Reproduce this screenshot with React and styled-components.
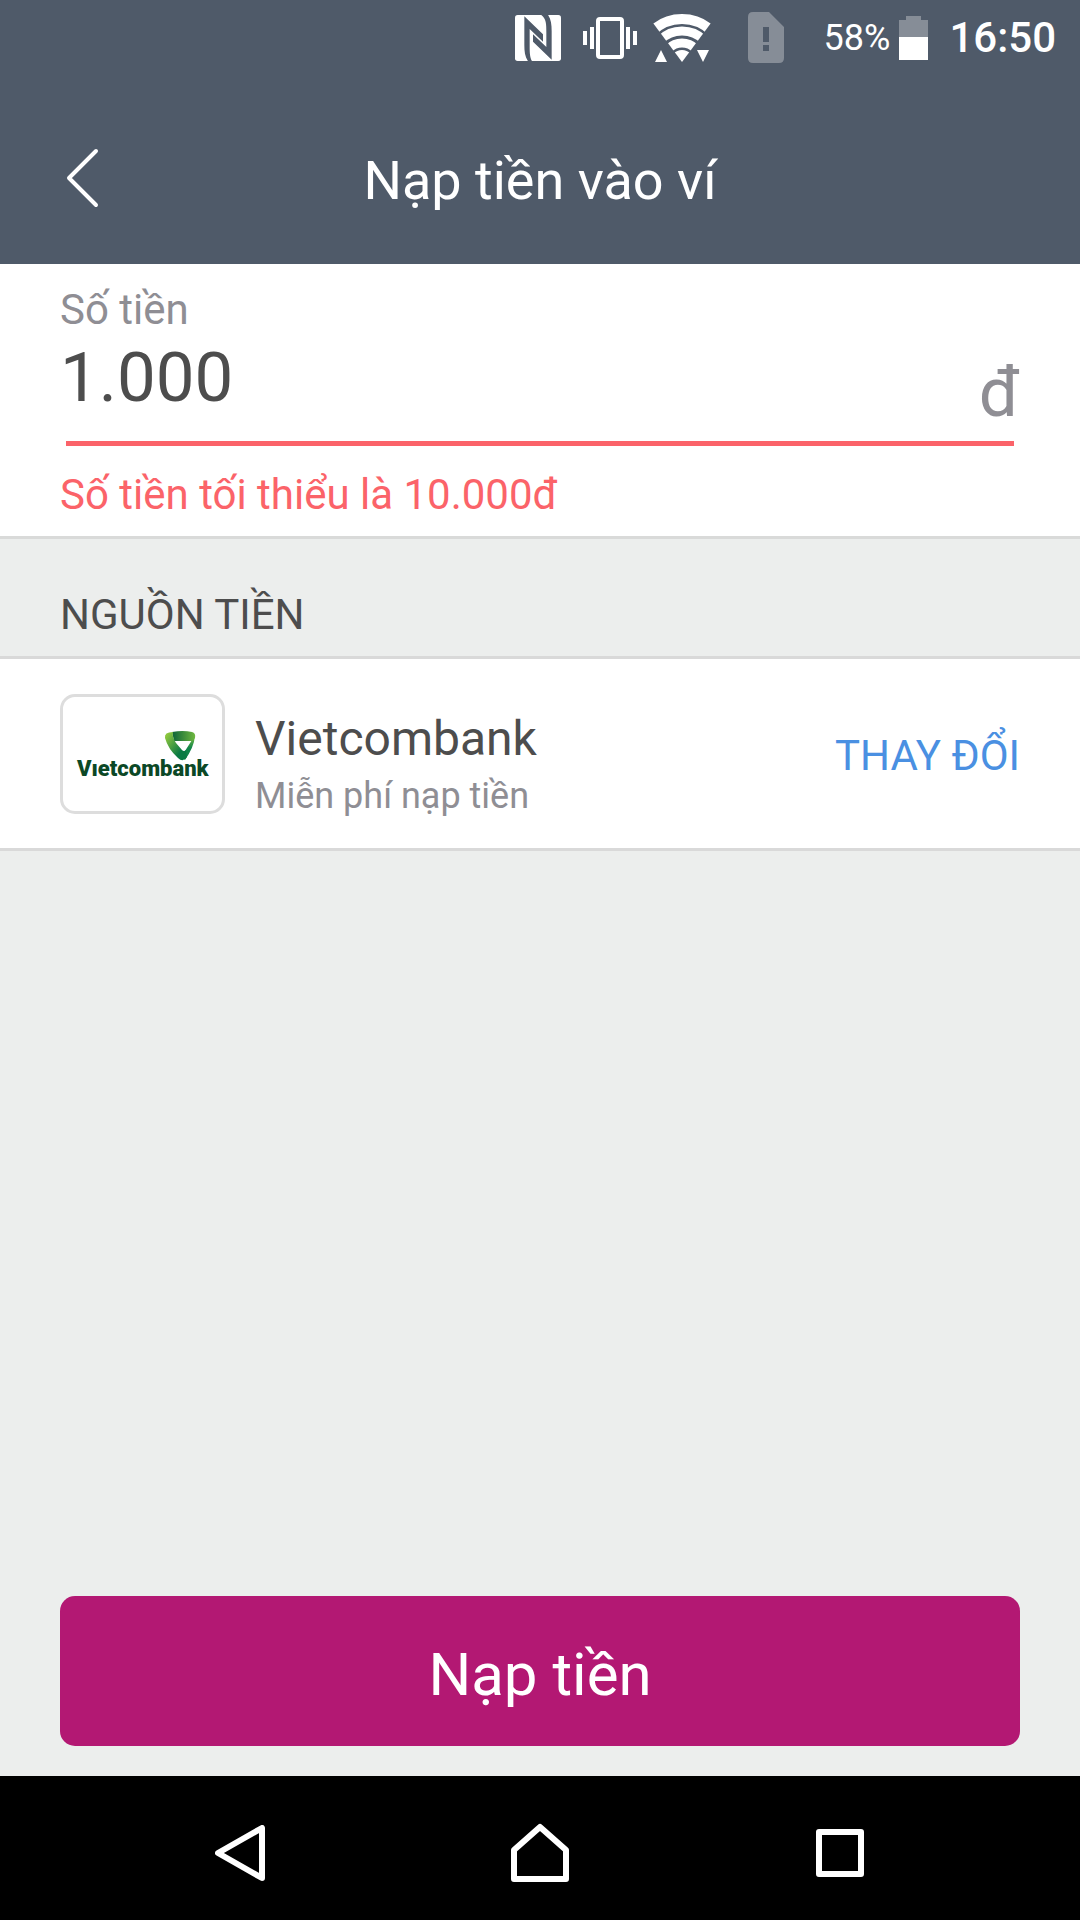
import React, { useState } from "react";
import styled, { createGlobalStyle } from "styled-components";

const GlobalStyle = createGlobalStyle`
  *, *::before, *::after { box-sizing: border-box; }
  body { margin: 0; background: #eceeed; }
  button, input { font: inherit; }
`;

const Screen = styled.div`
  display: flex;
  flex-direction: column;
  min-height: 100vh;
  background: #eceeed;
  color: #4d4d4d;
  font-family: Roboto, "Noto Sans", sans-serif;
  font-size: 42px;
  line-height: 48px;
`;

const StatusBar = styled.div`
  display: flex;
  justify-content: flex-end;
  align-items: center;
  height: 72px;
  padding: 3px 24px 0 0;
  background: #4f5a69;
  color: #fff;
`;

const StatusIcon = styled.svg`
  display: block;
  flex: none;
  margin-right: ${(p) => p.$gap}px;
`;

const BatteryLevel = styled.span`
  margin-right: 9px;
  font-size: 36px;
`;

const Clock = styled.time`
  font-weight: 500;
`;

const Header = styled.header`
  display: grid;
  grid-template-columns: 120px 1fr 120px;
  align-items: center;
  height: 192px;
  padding: 25px 24px 0;
  background: #4f5a69;
  color: #fff;
`;

const BackButton = styled.button`
  display: flex;
  align-items: center;
  height: 120px;
  padding: 0 0 6px 40px;
  border: 0;
  background: none;
  color: inherit;
`;

const Title = styled.h1`
  margin: 0;
  font-size: 54px;
  font-weight: 400;
  line-height: 64px;
  text-align: center;
`;

const AmountPanel = styled.section`
  padding: 22px 60px 17px;
  border-bottom: 3px solid #d9dad9;
  background: #fff;
`;

const FieldLabel = styled.label`
  display: block;
  color: #8f8e94;
`;

const AmountRow = styled.div`
  display: flex;
  height: 107px;
  font-size: 69px;
  line-height: 84px;
`;

const AmountInput = styled.input`
  flex: 1;
  min-width: 0;
  height: 86px;
  padding: 0;
  border: 0;
  outline: 0;
  background: transparent;
  color: #4d4d4d;
`;

const Currency = styled.span`
  align-self: flex-end;
  padding-bottom: 6px;
  color: #8f8e94;
`;

const Underline = styled.div`
  height: 5px;
  margin: 0 6px;
  background: #fb6369;
`;

const ErrorText = styled.p`
  margin: 25px 0 0;
  color: #fb6369;
`;

const SectionTitle = styled.h2`
  margin: 0;
  padding: 52px 60px 17px;
  font-size: 42px;
  font-weight: 400;
`;

const SourceRow = styled.section`
  display: flex;
  align-items: center;
  gap: 30px;
  padding: 28px 60px;
  border: solid #d9d9d9;
  border-width: 3px 0;
  background: #fff;
`;

const LogoFrame = styled.div`
  flex: none;
  width: 165px;
  height: 120px;
  border: 3px solid #dddddd;
  border-radius: 15px;
`;

const SourceInfo = styled.div`
  flex: 1;
  padding-top: 24px;
`;

const SourceName = styled.div`
  font-size: 48px;
  line-height: 56px;
`;

const SourceNote = styled.div`
  padding-top: 5px;
  color: #8f8e94;
  font-size: 36px;
`;

const ChangeButton = styled.button`
  padding: 4px 0 0;
  border: 0;
  background: none;
  color: #4a90e2;
`;

const Footer = styled.footer`
  margin-top: auto;
  padding: 30px 60px;
`;

const SubmitButton = styled.button`
  display: block;
  width: 100%;
  height: 150px;
  padding: 7px 0 0;
  border: 0;
  border-radius: 15px;
  background: #b31873;
  color: #fff;
  font-size: 60px;
  line-height: 72px;
`;

const NavBar = styled.nav`
  display: flex;
  justify-content: center;
  height: 144px;
  background: #000;
`;

const NavButton = styled.button`
  display: flex;
  flex: 0 1 300px;
  align-items: center;
  justify-content: center;
  padding: 10px 0 0;
  border: 0;
  background: none;
  color: #fff;
`;

const NfcIcon = () => (
  <StatusIcon $gap={22} width="46" height="46" viewBox="0 0 138 138" aria-label="NFC">
    <clipPath id="nfc-frame">
      <rect width="138" height="138" rx="8" />
    </clipPath>
    <g clipPath="url(#nfc-frame)">
      <rect width="138" height="138" fill="#fff" />
      <g fill="#4f5a69">
        <path d="M28 4 L84 58 V80 L44 42 V86 C44 112 44 128 52 140 H40 C30 126 28 110 28 90 Z" />
        <path d="M110 134 L54 80 V58 L94 96 V52 C94 26 94 10 76 -2 H98 C108 12 110 28 110 48 Z" />
      </g>
    </g>
  </StatusIcon>
);

const VibrateIcon = () => (
  <StatusIcon $gap={16} width="54" height="42" viewBox="0 0 54 42" aria-label="Rung">
    <rect x="15" y="2" width="24" height="38" rx="2" fill="none" stroke="#fff" strokeWidth="4" />
    <path d="M0 14h4v14H0zM7 10h4v22H7zM43 10h4v22h-4zM50 14h4v14h-4z" fill="#fff" />
  </StatusIcon>
);

const WifiIcon = () => (
  <StatusIcon $gap={37} width="58" height="50" viewBox="0 0 58 50" aria-label="Wi-Fi">
    <clipPath id="wifi-cone">
      <path d="M29 49 L-3 6 V-4 H61 V6 Z" />
    </clipPath>
    <g clipPath="url(#wifi-cone)" fill="none" stroke="#fff">
      <circle cx="29" cy="49" r="6" strokeWidth="12" />
      <circle cx="29" cy="49" r="19" strokeWidth="9" />
      <circle cx="29" cy="49" r="31" strokeWidth="9" />
      <circle cx="29" cy="49" r="43" strokeWidth="10" />
    </g>
    <path d="M8 37 L14 49 H2 ZM44 37 H56 L50 49 Z" fill="#fff" />
  </StatusIcon>
);

const SimIcon = () => (
  <StatusIcon $gap={40} width="36" height="51" viewBox="0 0 36 51" aria-label="SIM">
    <path
      fillRule="evenodd"
      d="M5 0 H21 L36 15 V46 Q36 51 31 51 H5 Q0 51 0 46 V5 Q0 0 5 0Z M15 15 V30 H21 V15Z M15 33 V39 H21 V33Z"
      fill="#868d97"
    />
  </StatusIcon>
);

const BatteryIcon = () => (
  <StatusIcon $gap={21} width="29" height="44" viewBox="0 0 29 44" aria-label="Pin">
    <path d="M7 0 H22 V4 H29 V21 H0 V4 H7Z" fill="#868d97" />
    <path d="M0 21 H29 V44 H0Z" fill="#fff" />
  </StatusIcon>
);

const VietcombankLogo = () => (
  <svg width="159" height="114" viewBox="0 0 159 114" role="img" aria-label="Vietcombank">
    <defs>
      <linearGradient id="vcb-left" x1="0" y1="0" x2="1" y2="1">
        <stop offset="0.1" stopColor="#8cc63f" />
        <stop offset="0.7" stopColor="#0a7a43" />
      </linearGradient>
      <linearGradient id="vcb-top" x1="0" y1="0" x2="1" y2="0">
        <stop offset="0" stopColor="#0b6338" />
        <stop offset="1" stopColor="#6fb83f" />
      </linearGradient>
      <linearGradient id="vcb-right" x1="0" y1="0" x2="0" y2="1">
        <stop offset="0" stopColor="#7cbd40" />
        <stop offset="0.5" stopColor="#11854a" />
      </linearGradient>
    </defs>
    <g transform="translate(102 34)">
      <path d="M30 5 Q29 16 20 29 L15 24 L20 20 L27 9 Z" fill="url(#vcb-right)" />
      <path d="M7 1 Q18 -1 27 1 Q31 2 30 7 L27 10 H9 Z" fill="url(#vcb-top)" />
      <path d="M8 1 Q7 6 11 12 L17 19 Q19 21 21 19 L22 26 Q18 32 13 27 Q3 18 0 7 Q-1 1 8 1Z" fill="url(#vcb-left)" />
    </g>
    <text x="14" y="79" fill="#0b4826" fontFamily="Roboto, sans-serif" fontSize="22" fontWeight="900">
      Vıetcombank
    </text>
  </svg>
);

const strokeProps = {
  fill: "none",
  stroke: "currentColor",
  strokeLinejoin: "round",
  strokeLinecap: "round",
};

export default function App() {
  const [amount, setAmount] = useState("1.000");

  return (
    <Screen>
      <GlobalStyle />
      <StatusBar>
        <NfcIcon />
        <VibrateIcon />
        <WifiIcon />
        <SimIcon />
        <BatteryLevel>58%</BatteryLevel>
        <BatteryIcon />
        <Clock>16:50</Clock>
      </StatusBar>

      <Header>
        <BackButton type="button" aria-label="Quay lại">
          <svg width="36" height="60" viewBox="0 0 36 60" strokeWidth="4" {...strokeProps}>
            <path d="M32 3 L5 30 L32 57" />
          </svg>
        </BackButton>
        <Title>Nạp tiền vào ví</Title>
      </Header>

      <AmountPanel>
        <FieldLabel htmlFor="amount">Số tiền</FieldLabel>
        <AmountRow>
          <AmountInput
            id="amount"
            inputMode="numeric"
            value={amount}
            aria-describedby="amount-error"
            onChange={(e) => setAmount(e.target.value)}
          />
          <Currency>đ</Currency>
        </AmountRow>
        <Underline />
        <ErrorText id="amount-error">Số tiền tối thiểu là 10.000đ</ErrorText>
      </AmountPanel>

      <SectionTitle>NGUỒN TIỀN</SectionTitle>
      <SourceRow>
        <LogoFrame>
          <VietcombankLogo />
        </LogoFrame>
        <SourceInfo>
          <SourceName>Vietcombank</SourceName>
          <SourceNote>Miễn phí nạp tiền</SourceNote>
        </SourceInfo>
        <ChangeButton type="button">THAY ĐỔI</ChangeButton>
      </SourceRow>

      <Footer>
        <SubmitButton type="button">Nạp tiền</SubmitButton>
      </Footer>

      <NavBar>
        <NavButton type="button" aria-label="Trở về">
          <svg width="50" height="56" viewBox="0 0 50 56" strokeWidth="6" {...strokeProps}>
            <path d="M47 3 V53 L3 28 Z" />
          </svg>
        </NavButton>
        <NavButton type="button" aria-label="Màn hình chính">
          <svg width="58" height="60" viewBox="0 0 58 60" strokeWidth="6" {...strokeProps}>
            <path d="M3 56 V27 L29 4 L55 27 V56 Z" />
          </svg>
        </NavButton>
        <NavButton type="button" aria-label="Ứng dụng gần đây">
          <svg width="50" height="48" viewBox="0 0 50 48" strokeWidth="6" {...strokeProps}>
            <path d="M4 3 H46 V45 H4 Z" />
          </svg>
        </NavButton>
      </NavBar>
    </Screen>
  );
}
